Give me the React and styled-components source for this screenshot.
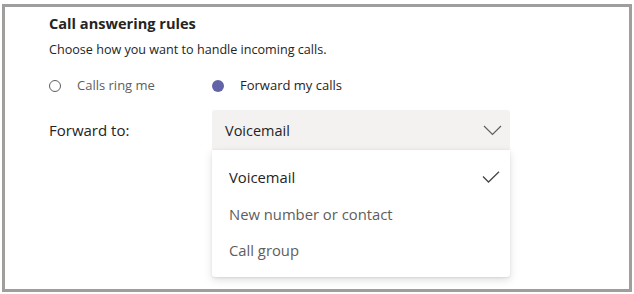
import React from "react";
import styled, { createGlobalStyle } from "styled-components";

const Global = createGlobalStyle`
  html, body { margin: 0; padding: 0; background: #ffffff; }
  body { font-family: "Open Sans", "Noto Sans", sans-serif; color: #252423; }
`;

const Frame = styled.div`
  box-sizing: border-box;
  margin: 4px 0 0 2px;
  width: 630px;
  height: 288px;
  border: 3px solid #a09e9c;
  background: #ffffff;
  padding: 6px 0 0 44px;
  position: relative;
`;

const Title = styled.h2`
  margin: 0;
  font-size: 14.6px;
  font-weight: 700;
  line-height: 21px;
  color: #252423;
`;

const Subtitle = styled.p`
  margin: 7px 0 0;
  font-size: 12.6px;
  line-height: 17px;
  color: #252423;
`;

const Row = styled.div`
  display: grid;
  grid-template-columns: 163px 298px;
  align-items: center;
`;

const RadioRow = styled(Row)`
  margin-top: 19px;
`;

const RadioOption = styled.label`
  display: flex;
  align-items: center;
  gap: 16px;
  font-size: 13px;
  line-height: 17px;
  color: ${(p) => (p.$checked ? "#252423" : "#605e5c")};
`;

const RadioDot = styled.span`
  box-sizing: border-box;
  width: 12px;
  height: 12px;
  border-radius: 50%;
  border: ${(p) => (p.$checked ? "none" : "1.3px solid #605e5c")};
  background: ${(p) => (p.$checked ? "#6264a7" : "transparent")};
`;

const FieldRow = styled(Row)`
  margin-top: 16px;
  position: relative;
`;

const Label = styled.span`
  font-size: 15px;
  line-height: 20px;
  color: #252423;
`;

const Select = styled.div`
  box-sizing: border-box;
  height: 40px;
  background: #f3f2f1;
  border-radius: 3px 3px 0 0;
  display: flex;
  align-items: center;
  justify-content: space-between;
  padding: 0 8px 0 13px;
  font-size: 14.5px;
  color: #252423;
`;

const Menu = styled.ul`
  position: absolute;
  left: 163px;
  top: 40px;
  width: 298px;
  box-sizing: border-box;
  margin: 0;
  padding: 9px 0 8px;
  list-style: none;
  background: #ffffff;
  border-radius: 0 0 3px 3px;
  box-shadow: 0 3px 8px rgba(0, 0, 0, 0.13), 0 0.5px 2px rgba(0, 0, 0, 0.08);
`;

const Item = styled.li`
  height: 36.5px;
  display: flex;
  align-items: center;
  justify-content: space-between;
  padding: 0 10px 0 17px;
  font-size: 14.8px;
  color: ${(p) => (p.$selected ? "#252423" : "#605e5c")};
`;

const Chevron = () => (
  <svg width="19" height="11" viewBox="0 0 19 11" fill="none">
    <path d="M1 1l8.5 8.5L18 1" stroke="#605e5c" strokeWidth="1.2" />
  </svg>
);

const Check = () => (
  <svg width="18" height="12" viewBox="0 0 18 12" fill="none">
    <path d="M1 5.5l5.5 5.5L17 0.8" stroke="#484644" strokeWidth="1.3" />
  </svg>
);

export default function App() {
  return (
    <>
      <Global />
      <Frame>
        <Title>Call answering rules</Title>
        <Subtitle>Choose how you want to handle incoming calls.</Subtitle>
        <RadioRow>
          <RadioOption>
            <RadioDot />
            Calls ring me
          </RadioOption>
          <RadioOption $checked>
            <RadioDot $checked />
            Forward my calls
          </RadioOption>
        </RadioRow>
        <FieldRow>
          <Label>Forward to:</Label>
          <Select>
            Voicemail
            <Chevron />
          </Select>
          <Menu>
            <Item $selected>
              Voicemail
              <Check />
            </Item>
            <Item>New number or contact</Item>
            <Item>Call group</Item>
          </Menu>
        </FieldRow>
      </Frame>
    </>
  );
}
